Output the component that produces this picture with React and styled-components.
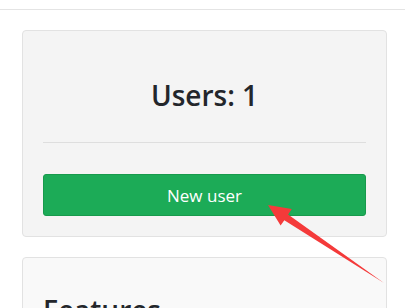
import React from "react";
import styled, { createGlobalStyle } from "styled-components";

const Global = createGlobalStyle`
  html, body { margin: 0; padding: 0; background: #fff; }
  body { font-family: "Open Sans", "Noto Sans", sans-serif; color: #212529; overflow: hidden; }
`;

const Page = styled.div`
  position: relative;
  width: 405px;
  height: 308px;
  overflow: hidden;
`;

const TopBar = styled.div`
  height: 9px;
  border-bottom: 1px solid #e4e4e4;
`;

const Content = styled.main`
  display: flex;
  flex-direction: column;
  gap: 20px;
  padding: 20px 18px 0 22px;
`;

const Card = styled.section`
  background: ${(p) => p.$bg};
  border: 1px solid #e2e2e2;
  border-radius: 4px;
  padding: ${(p) => p.$pad};
`;

const Title = styled.h2`
  margin: 0;
  font-size: 28px;
  font-weight: 600;
  line-height: 36px;
  text-align: center;
  color: #23262b;
`;

const Divider = styled.hr`
  margin: 29px 0 31px;
  border: 0;
  border-top: 1px solid #dedede;
`;

const Button = styled.button`
  display: block;
  width: 100%;
  height: 42px;
  background: #1cab57;
  border: 1px solid #179a4c;
  border-radius: 3px;
  color: #fff;
  font-family: "Open Sans", "Noto Sans", sans-serif;
  font-size: 17px;
  cursor: pointer;
`;

const SectionTitle = styled.h2`
  margin: 0;
  font-size: 28px;
  font-weight: 600;
  line-height: 34px;
  color: #23262b;
`;

const Arrow = styled.svg`
  position: absolute;
  left: 0;
  top: 0;
  pointer-events: none;
`;

export default function App() {
  return (
    <Page>
      <Global />
      <TopBar />
      <Content>
        <Card $bg="#f4f4f4" $pad="46px 20px 20px">
          <Title>Users: 1</Title>
          <Divider />
          <Button>New user</Button>
        </Card>
        <Card $bg="#f9f9f9" $pad="35px 20px 20px">
          <SectionTitle>Features</SectionTitle>
        </Card>
      </Content>
      <Arrow width="405" height="308" viewBox="0 0 405 308">
        <polygon
          points="268,205 291.8,209 288.1,214.4 384,283 284.3,220.2 280.6,225.6"
          fill="#f43a3a"
        />
      </Arrow>
    </Page>
  );
}
